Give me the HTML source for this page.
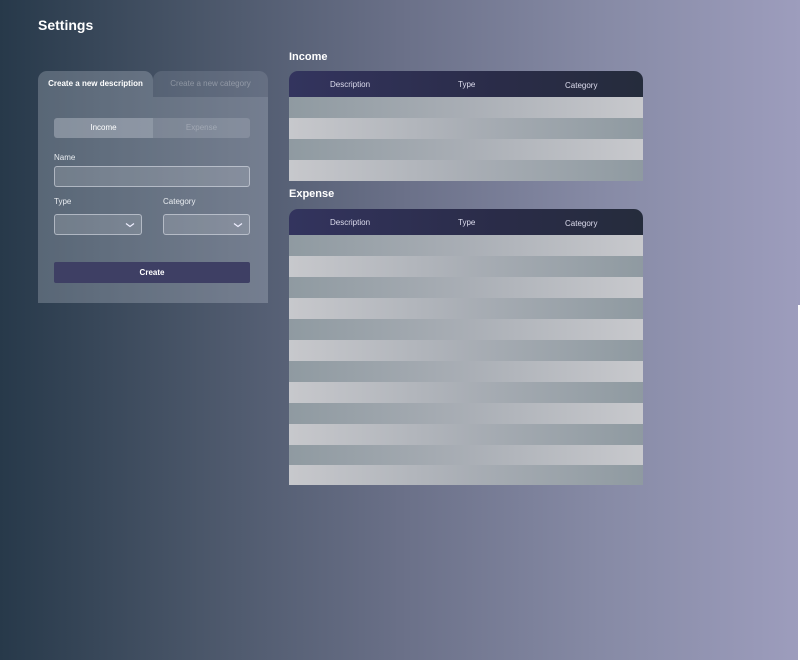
<!DOCTYPE html>
<html><head><style>
*{margin:0;padding:0;box-sizing:border-box}
body{width:800px;height:660px;overflow:hidden;font-family:"Liberation Sans",sans-serif;background:linear-gradient(90deg,#27394a 0%,#4a5669 25%,#6a7088 50%,#868aa5 75%,#9d9dbd 100%);position:relative;color:#fff}
.abs{position:absolute}
h1{position:absolute;left:38px;top:17px;font-size:14px;font-weight:bold}
.sec{position:absolute;left:289px;font-size:11px;font-weight:bold}
.panel{left:38px;top:97px;width:230px;height:206px;background:rgba(200,210,220,0.28)}
.tab1{left:38px;top:71px;width:115px;height:26px;background:rgba(200,210,220,0.28);border-radius:9px 9px 0 0;font-size:8px;font-weight:bold;text-align:center;line-height:26px}
.tab2{left:153px;top:71px;width:115px;height:26px;background:rgba(200,210,220,0.15);border-radius:9px 9px 0 0;font-size:8px;text-align:center;line-height:26px;color:rgba(255,255,255,0.3)}
.tog{top:118px;height:20px;font-size:8px;text-align:center;line-height:20px}
.lbl{font-size:8px;color:#e8ecf0}
.inp{border:1px solid rgba(225,230,238,0.55);border-radius:3px;background:rgba(255,255,255,0.14);height:21px}
.chev{position:absolute;right:6px;top:6px}
.btn{left:54px;top:262px;width:196px;height:21px;background:#3e3f64;border-radius:2px;font-size:8px;font-weight:bold;text-align:center;line-height:21px}
.tbl{position:absolute;left:289px;width:354px}
.hd{height:26px;border-radius:9px 9px 0 0;background:linear-gradient(90deg,#33345e,#2a2c48 60%,#252c3c);font-size:8px;color:#dde;position:relative}
.hd span{position:absolute;top:9px}
.r1{background:linear-gradient(90deg,#8f9aa1,#a9aeb5 50%,#c8c9cd)}
.r2{background:linear-gradient(90deg,#c7c8cc,#a9aeb5 50%,#8f9aa1)}
</style></head><body>
<h1>Settings</h1>
<div class="sec" style="top:51px">Income</div>
<div class="sec" style="top:188px">Expense</div>
<div class="abs tab1">Create a new description</div>
<div class="abs tab2">Create a new category</div>
<div class="abs panel"></div>
<div class="abs tog" style="left:54px;width:99px;background:rgba(200,205,215,0.4);border-radius:3px 0 0 3px">Income</div>
<div class="abs tog" style="left:153px;width:97px;background:rgba(200,205,215,0.22);border-radius:0 3px 3px 0;color:rgba(255,255,255,0.25)">Expense</div>
<div class="abs lbl" style="left:54px;top:153px">Name</div>
<div class="abs inp" style="left:54px;top:166px;width:196px"></div>
<div class="abs lbl" style="left:54px;top:197px">Type</div>
<div class="abs lbl" style="left:163px;top:197px">Category</div>
<div class="abs inp" style="left:54px;top:214px;width:88px"><svg class="chev" width="10" height="8" viewBox="0 0 10 8"><path d="M1 2.5L5 5.5L9 2.5" stroke="#eef" stroke-width="1.2" fill="none"/></svg></div>
<div class="abs inp" style="left:163px;top:214px;width:87px"><svg class="chev" width="10" height="8" viewBox="0 0 10 8"><path d="M1 2.5L5 5.5L9 2.5" stroke="#eef" stroke-width="1.2" fill="none"/></svg></div>
<div class="abs btn">Create</div>

<div class="tbl" style="top:71px">
<div class="hd"><span style="left:41px">Description</span><span style="left:169px">Type</span><span style="left:276px;top:10px">Category</span></div>
<div class="r1" style="height:21px"></div><div class="r2" style="height:21px"></div><div class="r1" style="height:21px"></div><div class="r2" style="height:21px"></div>
</div>
<div class="tbl" style="top:209px">
<div class="hd"><span style="left:41px">Description</span><span style="left:169px">Type</span><span style="left:276px;top:10px">Category</span></div>
<div class="r1" style="height:21px"></div><div class="r2" style="height:21px"></div><div class="r1" style="height:21px"></div><div class="r2" style="height:21px"></div>
<div class="r1" style="height:21px"></div><div class="r2" style="height:21px"></div><div class="r1" style="height:21px"></div><div class="r2" style="height:21px"></div>
<div class="r1" style="height:21px"></div><div class="r2" style="height:21px"></div><div class="r1" style="height:20px"></div><div class="r2" style="height:20px"></div>
</div>
<div class="abs" style="left:798px;top:305px;width:2px;height:355px;background:#fff"></div>
</body></html>
